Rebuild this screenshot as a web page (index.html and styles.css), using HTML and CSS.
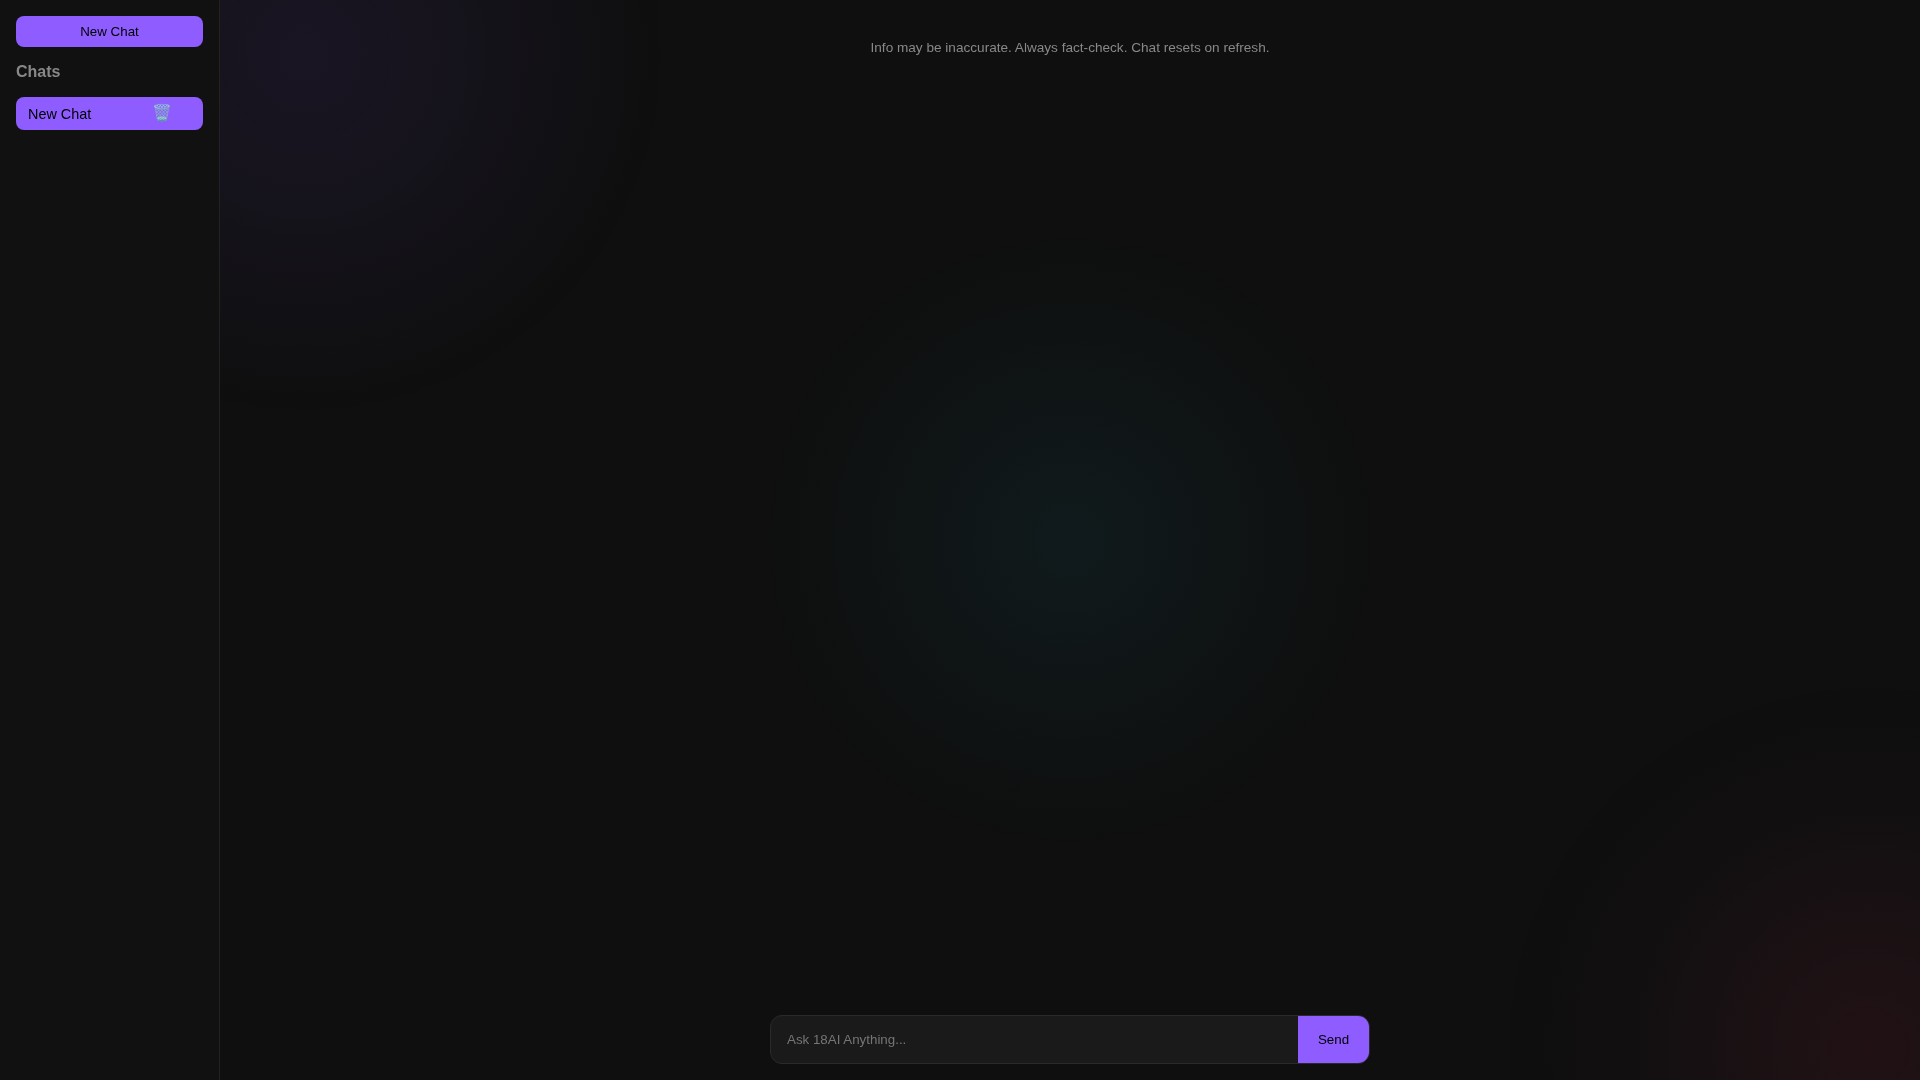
FILE: index.html
```html
<!DOCTYPE html>
<html lang="en">
<head>
<meta charset="utf-8">
<title>18AI</title>
<link rel="stylesheet" href="styles.css">
</head>
<body>
<div class="app">
  <aside class="sidebar">
    <button class="new-chat">New Chat</button>
    <h3 class="chats-title">Chats</h3>
    <div class="chat-item">
      <span class="chat-name">New Chat</span>
      <span class="delete">🗑️</span>
    </div>
  </aside>
  <main class="main">
    <p class="notice">Info may be inaccurate. Always fact-check. Chat resets on refresh.</p>
    <form class="composer">
      <input class="prompt" type="text" placeholder="Ask 18AI Anything...">
      <button class="send" type="button">Send</button>
    </form>
  </main>
</div>
</body>
</html>
```

FILE: styles.css
```css
* { box-sizing: border-box; }
html, body { height: 100%; margin: 0; }
body {
  font-family: "Liberation Sans", Arial, sans-serif;
  background-color: #0f0f0f;
  color: #ddd;
}
.app { display: flex; height: 100vh; will-change: transform; }
.sidebar {
  width: 220px;
  flex: none;
  padding: 16px;
  background: #111;
  border-right: 1px solid #222;
}
.new-chat {
  display: block;
  width: 100%;
  height: 31px;
  border: 0;
  border-radius: 8px;
  background: #8f5cff;
  color: #000;
  font: 13.33px "Liberation Sans", Arial, sans-serif;
}
.chats-title {
  margin: 16px 0;
  font-size: 16px;
  line-height: 18px;
  font-weight: 700;
  color: #888;
}
.chat-item {
  display: flex;
  align-items: center;
  justify-content: space-between;
  height: 33px;
  padding: 0 31px 0 12px;
  border-radius: 8px;
  background: #8f5cff;
  color: #000;
  font-size: 14.4px;
}
.delete { font-size: 16px; line-height: 18px; margin-top: -2px; }
.main {
  flex: 1;
  display: flex;
  flex-direction: column;
  align-items: center;
  padding: 16px;
  background-image:
    radial-gradient(circle at 5% 5%, rgba(138, 92, 255, 0.09), transparent 19%),
    radial-gradient(circle at 50% 50%, rgba(40, 210, 240, 0.06), transparent 31%),
    radial-gradient(circle at 97% 97%, rgba(255, 50, 90, 0.08), rgba(180, 60, 130, 0.025) 12%, transparent 19%);
}
.notice {
  margin: 24px 0 0;
  font-size: 13.6px;
  line-height: 16px;
  color: #888;
}
.composer {
  display: flex;
  width: 600px;
  height: 49px;
  margin-top: auto;
  border: 1px solid #2a2a2a;
  border-radius: 12px;
  background: #1a1a1a;
  overflow: hidden;
}
.prompt {
  flex: 1;
  min-width: 0;
  padding: 0 16px;
  border: 0;
  outline: 0;
  background: transparent;
  color: #ddd;
  font: 13.33px "Liberation Sans", Arial, sans-serif;
}
.prompt::placeholder { color: #757575; }
.send {
  width: 71px;
  border: 0;
  background: #8f5cff;
  color: #000;
  font: 13.33px "Liberation Sans", Arial, sans-serif;
}
```
